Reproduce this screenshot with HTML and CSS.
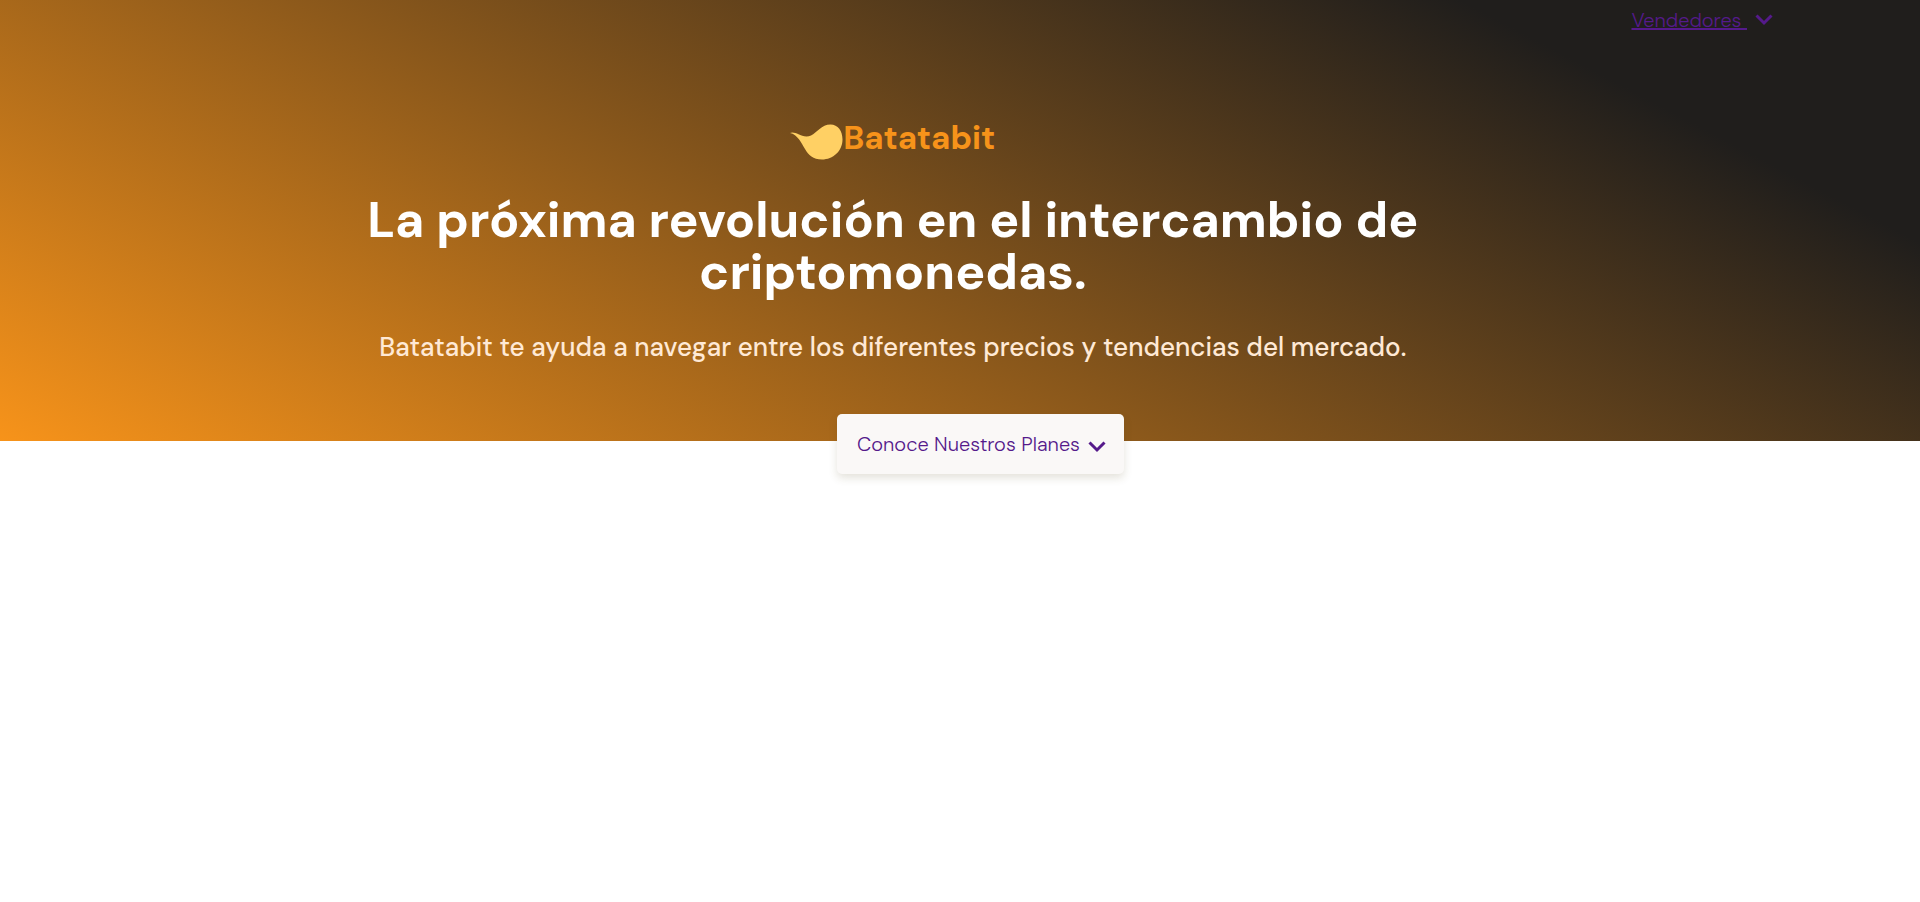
FILE: index.html
```html
<!DOCTYPE html>
<html lang="es">
<head>
  <meta charset="utf-8">
  <meta name="viewport" content="width=device-width, initial-scale=1">
  <title>Batatabit</title>
  <link rel="stylesheet" href="styles.css">
</head>
<body>
  <header class="hero">
    <nav class="hero-nav">
      <a class="nav-link" href="#vendedores"><span class="nav-label">Vendedores </span><svg class="chevron" viewBox="0 0 18 12" aria-hidden="true"><path d="M1.500 1.500 9 9 16.500 1.500"/></svg></a>
    </nav>
    <div class="hero-content">
      <div class="brand">
        <svg class="brand-mark" viewBox="0 0 53 36" aria-hidden="true"><path d="M0 9C2 7.800 5.500 8.700 8.500 10.300C12 12.200 17 13.300 21 11.500C27 8.500 31.500 .5 40.500 .5C48 .5 52.500 7 52.500 15.500C52.500 27 43 35.500 32 35.500C23 35.500 18.500 31 15 25C11.500 19 7.500 10.500 0 9Z"/></svg>
        <span class="brand-name">Batatabit</span>
      </div>
      <h1 class="hero-title">La próxima revolución en el intercambio de criptomonedas.</h1>
      <p class="hero-text">Batatabit te ayuda a navegar entre los diferentes precios y tendencias del mercado.</p>
    </div>
  </header>
  <main class="plans">
    <a class="plans-link" href="#planes">Conoce Nuestros Planes<svg class="chevron chevron-low" viewBox="0 0 18 12" aria-hidden="true"><path d="M1.500 1.500 9 9 16.500 1.500"/></svg></a>
  </main>
</body>
</html>
```
FILE: styles.css
```css
* {
  box-sizing: border-box;
}

body {
  min-height: 100vh;
  margin: 0;
  background: #fff;
  font-family: "DM Sans", Inter, "Liberation Sans", sans-serif;
}

.hero {
  padding-bottom: 78px;
  background: linear-gradient(207.8deg, #201e1c 16.69%, #f7931a 100%);
}

.hero-nav {
  display: flex;
  justify-content: flex-end;
  padding: 8px 147px 0 0;
}

.nav-link {
  display: flex;
  align-items: center;
  gap: 8px;
  color: #551a8b;
  font-size: 20px;
  font-weight: 300;
  line-height: 24px;
  text-decoration: none;
}

.nav-label {
  white-space: pre;
  text-decoration: underline;
  text-decoration-thickness: 2px;
}

.chevron {
  width: 18px;
  height: 12px;
  fill: none;
  stroke: #551a8b;
  stroke-width: 3px;
}

.chevron-low {
  margin-top: 6px;
}

.hero-content {
  padding: 84px 7% 0 0;
  text-align: center;
}

.brand {
  display: flex;
  justify-content: center;
  height: 44px;
}

.brand-mark {
  align-self: flex-end;
  width: 53px;
  height: 36px;
  fill: #ffd064;
}

.brand-name {
  color: #f7931a;
  font-size: 33px;
  font-weight: 700;
  line-height: 44px;
}

.hero-title {
  max-width: 1100px;
  margin: 34px auto 0;
  color: #fff;
  font-family: "DM Sans 36pt", "DM Sans", Inter, sans-serif;
  font-size: 50px;
  font-weight: 700;
  line-height: 52px;
}

.hero-text {
  margin: 33px 0 0;
  color: #ffe9d5;
  font-family: "DM Sans 24pt", "DM Sans", Inter, sans-serif;
  font-size: 26px;
  font-weight: 500;
  line-height: 32px;
}

.plans {
  display: flex;
  justify-content: center;
  margin-top: -27px;
  padding-left: 41px;
}

.plans-link {
  display: flex;
  align-items: center;
  gap: 8px;
  height: 60px;
  padding: 0 18px 0 20px;
  border-radius: 5px;
  background: #faf8f7;
  box-shadow: 0 4px 8px rgba(89, 73, 30, 0.16);
  color: #551a8b;
  font-size: 20px;
  font-weight: 300;
  text-decoration: none;
}
```
